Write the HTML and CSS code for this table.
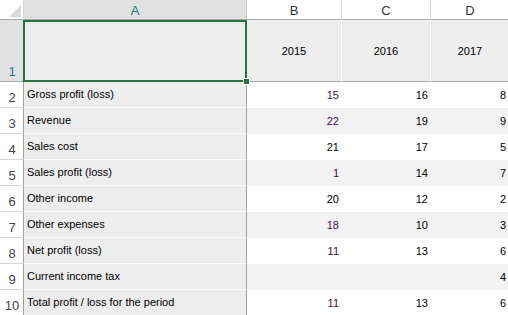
FILE: index.html
```html
<!DOCTYPE html>
<html>
<head>
<meta charset="utf-8">
<link rel="stylesheet" href="styles.css">
</head>
<body>
<div class="sheet">
  <div class="corner"><span class="tri"></span></div>
  <div class="ch ch-sel">A</div>
  <div class="ch">B</div>
  <div class="ch">C</div>
  <div class="ch ch-last">D</div>

  <div class="rh rh-sel">1</div>
  <div class="a1"><span class="selbox"><span class="handle"></span></span></div>
  <div class="yr">2015</div>
  <div class="yr">2016</div>
  <div class="yr yr-last">2017</div>

  <div class="rh">2</div>
  <div class="lbl">Gross profit (loss)</div>
  <div class="num p">15</div><div class="num">16</div><div class="num">8</div>

  <div class="rh">3</div>
  <div class="lbl">Revenue</div>
  <div class="num alt p">22</div><div class="num alt">19</div><div class="num alt">9</div>

  <div class="rh">4</div>
  <div class="lbl">Sales cost</div>
  <div class="num">21</div><div class="num">17</div><div class="num">5</div>

  <div class="rh">5</div>
  <div class="lbl">Sales profit (loss)</div>
  <div class="num alt p">1</div><div class="num alt">14</div><div class="num alt">7</div>

  <div class="rh">6</div>
  <div class="lbl">Other income</div>
  <div class="num">20</div><div class="num">12</div><div class="num">2</div>

  <div class="rh">7</div>
  <div class="lbl">Other expenses</div>
  <div class="num alt p">18</div><div class="num alt">10</div><div class="num alt">3</div>

  <div class="rh">8</div>
  <div class="lbl">Net profit (loss)</div>
  <div class="num p">11</div><div class="num">13</div><div class="num">6</div>

  <div class="rh">9</div>
  <div class="lbl">Current income tax</div>
  <div class="num alt"></div><div class="num alt"></div><div class="num alt">4</div>

  <div class="rh">10</div>
  <div class="lbl">Total profit / loss for the period</div>
  <div class="num p">11</div><div class="num">13</div><div class="num">6</div>
</div>
</body>
</html>
```

FILE: styles.css
```css
html, body {
  margin: 0;
  padding: 0;
  background: #ffffff;
  overflow: hidden;
}

.sheet {
  display: grid;
  grid-template-columns: 24px 223px 95px 89px 78px;
  grid-template-rows: 20px 62px repeat(9, 26px);
  font-family: "Liberation Sans", Arial, sans-serif;
  font-size: 11px;
  color: #000;
}

.sheet > div {
  box-sizing: border-box;
}

.corner {
  position: relative;
  background: #ffffff;
  border-right: 1px solid #d4d4d4;
  border-bottom: 1px solid #ababab;
}

.tri {
  position: absolute;
  left: 9px;
  top: 5px;
  width: 12px;
  height: 12px;
  background: #dadada;
  clip-path: polygon(100% 0, 100% 100%, 0 100%);
}

.ch {
  display: flex;
  align-items: center;
  justify-content: center;
  background: #ffffff;
  border-right: 1px solid #d8d8d8;
  border-bottom: 1px solid #ababab;
  font-size: 13px;
  color: #333;
  padding-top: 1px;
}

.ch-sel {
  background: #e1e1e1;
  color: #1f7a6e;
  border-right: 1px solid #c6c6c6;
}

.ch-last {
  border-right: none;
}

.rh {
  display: flex;
  align-items: flex-end;
  justify-content: center;
  background: #ffffff;
  border-right: 1px solid #a0a0a0;
  border-bottom: 1px solid #d6d6d6;
  font-size: 13px;
  color: #444;
  padding-bottom: 2px;
  padding-left: 1px;
}

.rh-sel {
  background: #e1e1e1;
  color: #1f7a8a;
  border-bottom: 1px solid #ababab;
}

.a1 {
  position: relative;
  background: #ededed;
  border-right: 1px solid #a0a0a0;
  border-bottom: 1px solid #a6a6a6;
}

.selbox {
  position: absolute;
  left: -1px;
  top: 0;
  width: 224px;
  height: 62px;
  box-sizing: border-box;
  border: 2px solid #217346;
  z-index: 2;
}

.handle {
  position: absolute;
  right: -4px;
  bottom: -4px;
  width: 5px;
  height: 5px;
  background: #217346;
  box-shadow: 0 0 0 1px #ffffff;
}

.yr {
  display: flex;
  align-items: center;
  justify-content: center;
  background: #ededed;
  border-right: 1px solid #ffffff;
  border-bottom: 1px solid #a6a6a6;
  padding-top: 1px;
}

.yr-last {
  border-right: none;
}

.lbl {
  display: flex;
  align-items: center;
  background: #ededed;
  border-right: 1px solid #a0a0a0;
  border-bottom: 1px solid #fafafa;
  padding-left: 3px;
  padding-bottom: 1px;
  white-space: nowrap;
}

.num {
  display: flex;
  align-items: center;
  justify-content: flex-end;
  background: #ffffff;
  padding-right: 3px;
  padding-bottom: 1px;
}

.num.alt {
  background: #f2f2f2;
}

.num:nth-child(5n) {
  padding-right: 3px;
}

.p {
  color: #43104a;
}
```
